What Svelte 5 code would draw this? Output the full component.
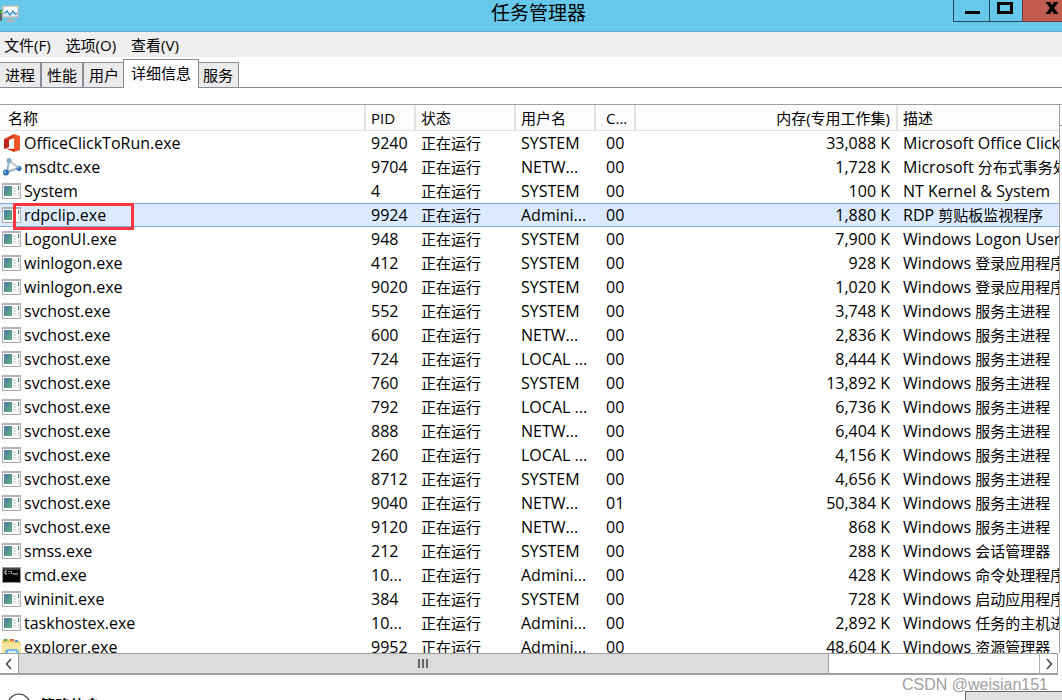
<script>
  const tabs = ['进程', '性能', '用户', '详细信息', '服务'];
  let activeTab = '详细信息';
  let selected = 3;

  const columns = [
    { key: 'name', label: '名称' },
    { key: 'pid', label: 'PID' },
    { key: 'status', label: '状态' },
    { key: 'user', label: '用户名' },
    { key: 'cpu', label: 'C...' },
    { key: 'mem', label: '内存(专用工作集)' },
    { key: 'desc', label: '描述' }
  ];

  // name, pid, user, cpu, memory, vendor part and local part of the description, icon
  const rows = [
    ['OfficeClickToRun.exe', '9240', 'SYSTEM', '00', '33,088', 'Microsoft Office Click', '', 'office'],
    ['msdtc.exe', '9704', 'NETW...', '00', '1,728', 'Microsoft', '分布式事务处', 'msdtc'],
    ['System', '4', 'SYSTEM', '00', '100', 'NT Kernel & System', ''],
    ['rdpclip.exe', '9924', 'Admini...', '00', '1,880', 'RDP', '剪贴板监视程序'],
    ['LogonUI.exe', '948', 'SYSTEM', '00', '7,900', 'Windows Logon User', ''],
    ['winlogon.exe', '412', 'SYSTEM', '00', '928', 'Windows', '登录应用程序'],
    ['winlogon.exe', '9020', 'SYSTEM', '00', '1,020', 'Windows', '登录应用程序'],
    ['svchost.exe', '552', 'SYSTEM', '00', '3,748', 'Windows', '服务主进程'],
    ['svchost.exe', '600', 'NETW...', '00', '2,836', 'Windows', '服务主进程'],
    ['svchost.exe', '724', 'LOCAL ...', '00', '8,444', 'Windows', '服务主进程'],
    ['svchost.exe', '760', 'SYSTEM', '00', '13,892', 'Windows', '服务主进程'],
    ['svchost.exe', '792', 'LOCAL ...', '00', '6,736', 'Windows', '服务主进程'],
    ['svchost.exe', '888', 'NETW...', '00', '6,404', 'Windows', '服务主进程'],
    ['svchost.exe', '260', 'LOCAL ...', '00', '4,156', 'Windows', '服务主进程'],
    ['svchost.exe', '8712', 'SYSTEM', '00', '4,656', 'Windows', '服务主进程'],
    ['svchost.exe', '9040', 'NETW...', '01', '50,384', 'Windows', '服务主进程'],
    ['svchost.exe', '9120', 'NETW...', '00', '868', 'Windows', '服务主进程'],
    ['smss.exe', '212', 'SYSTEM', '00', '288', 'Windows', '会话管理器'],
    ['cmd.exe', '10...', 'Admini...', '00', '428', 'Windows', '命令处理程序', 'cmd'],
    ['wininit.exe', '384', 'SYSTEM', '00', '728', 'Windows', '启动应用程序'],
    ['taskhostex.exe', '10...', 'Admini...', '00', '2,892', 'Windows', '任务的主机进'],
    ['explorer.exe', '9952', 'Admini...', '00', '48,604', 'Windows', '资源管理器', 'folder']
  ].map(([name, pid, user, cpu, mem, vendor, desc, icon = 'app']) => ({ name, pid, user, cpu, mem, vendor, desc, icon }));
</script>

<div class="window">
  <header class="titlebar">
    <svg class="logo" width="20" height="20" viewBox="0 0 20 20" aria-hidden="true">
      <path d="M0 6h2v11H0z" fill="#666" />
      <path d="M0 7h2v2H0z" fill="#42d52c" />
      <path d="M9 14h3v2h3l1 2H6l1-2h2z" fill="#b5b5b5" />
      <rect x="3" y="2" width="15" height="11" fill="#f5fbff" stroke="#c2bebb" stroke-width="1.500" />
      <path d="M4 9l3-2 3 3 3-3 4 2v3H4z" fill="#d3ebf7" />
      <path d="M4 9h1l2-2 3 4 3-4 2 3 2-1" fill="none" stroke="#2581b8" stroke-width="1.200" />
    </svg>
    <h1>任务管理器</h1>
    <div class="controls">
      <button class="min" aria-label="最小化">
        <svg width="16" height="14" viewBox="0 0 16 14"><path d="M1 10h15v3H1z" /></svg>
      </button>
      <button class="max" aria-label="最大化">
        <svg width="16" height="14" viewBox="0 0 16 14"><path d="M0 1h16v12H0zM3 4v6h10V4z" fill-rule="evenodd" /></svg>
      </button>
      <button class="close" aria-label="关闭">
        <svg width="14" height="14" viewBox="0 0 14 14"><path d="M1 1h4l2 3 2-3h4v1L9 7l4 5v1H9l-2-3-2 3H1v-1l4-5-4-5z" /></svg>
      </button>
    </div>
  </header>

  <nav class="menubar">
    <button>文件(F)</button>
    <button>选项(O)</button>
    <button>查看(V)</button>
  </nav>

  <div class="tabs" role="tablist">
    {#each tabs as tab}
      <button
        role="tab"
        class="tab"
        class:active={tab === activeTab}
        aria-selected={tab === activeTab}
        on:click={() => activeTab = tab}
      >{tab}</button>
    {/each}
  </div>

  <main class="panel">
    <div class="list">
      <table>
        <colgroup>
          {#each columns as col}
            <col class="col-{col.key}" />
          {/each}
        </colgroup>
        <thead>
          <tr>
            {#each columns as col}
              <th class={col.key}>{col.label}</th>
            {/each}
          </tr>
        </thead>
        <tbody>
          {#each rows as row, i}
            <tr class:selected={i === selected} on:click={() => selected = i}>
              <td class="name">
                <div class="proc">
                  {#if row.icon === 'office'}
                    <svg width="20" height="20" viewBox="0 0 20 20">
                      <path d="M2 6l10-5v4L7 7v7l-5 2z" fill="#dd3a18" />
                      <path d="M2 6l5 1v7l-5 2z" fill="#c2261a" />
                      <path d="M12 1l6 2v14l-6 2z" fill="#f0562a" />
                      <path d="M4 15.500l8 .5v3z" fill="#d92f17" />
                    </svg>
                  {:else if row.icon === 'msdtc'}
                    <svg width="20" height="20" viewBox="0 0 20 20">
                      <path d="M7 4L5 15l12-4zM7 4l10 7" fill="none" stroke="#9eb0bd" stroke-width="2" />
                      <path d="M8 5l8 5" stroke="#e4ebf0" />
                      <circle cx="7" cy="3.500" r="2.500" fill="#7aa9cc" />
                      <circle cx="4" cy="15.500" r="3" fill="#2d75b3" />
                      <circle cx="17" cy="11.500" r="2.500" fill="#2d75b3" />
                      <circle cx="3" cy="15" r="1" fill="#9fd0ee" />
                      <circle cx="16" cy="10.500" r="1" fill="#9fd0ee" />
                    </svg>
                  {:else if row.icon === 'cmd'}
                    <svg width="20" height="20" viewBox="0 0 20 20">
                      <path d="M.5 2.500h18v15H.5z" fill="#050505" stroke="#999" />
                      <path d="M1 3h17v2H1z" fill="#444" />
                      <path d="M5 6H3v3h2M7 6v1M7 8v1M9 6l1 3M11 9h5" fill="none" stroke="#ddd" />
                    </svg>
                  {:else if row.icon === 'folder'}
                    <svg width="20" height="20" viewBox="0 0 20 20">
                      <path d="M0 4V3l2-1h5l1 2h10l1 2v14H0z" fill="#efcf70" />
                      <path d="M2 2h3v2H2z" fill="#42a55a" />
                      <path d="M8 2h4v2H8z" fill="#e56b43" />
                      <path d="M13 3h3v2h-3z" fill="#4d93c7" />
                      <path d="M0 6h19v14H0z" fill="#f9e5a0" />
                      <path d="M3 20v-6l2-2h10l2 2v6z" fill="#76bce3" />
                      <path d="M6 14h8v2H6z" fill="#d5effa" />
                    </svg>
                  {:else}
                    <svg width="20" height="20" viewBox="0 0 20 20">
                      <defs>
                        <linearGradient id="pane-{i}" x1="0" y1="0" x2="1" y2="1">
                          <stop offset="0" stop-color="#4a7aa5" />
                          <stop offset="1" stop-color="#62b07a" />
                        </linearGradient>
                      </defs>
                      <path d="M.5 2.500h18v15H.5z" fill="#fafafa" stroke="#a6a8aa" />
                      <path d="M0 2h19v2H0z" fill="#b0b3b6" />
                      <path d="M2 5h8v10H2z" fill="url(#pane-{i})" />
                      <path d="M11 6h3v2h-3zM11 9h3v2h-3zM11 12h3v2h-3z" fill="#dcdee0" />
                      <path d="M16 5h1v4h-1z" fill="#318d80" />
                      <path d="M16 10h1v4h-1z" fill="#d5d8da" />
                    </svg>
                  {/if}
                  <span>{row.name}</span>
                  {#if row.name === 'rdpclip.exe'}
                    <i class="marker"></i>
                  {/if}
                </div>
              </td>
              <td class="pid">{row.pid}</td>
              <td class="status">正在运行</td>
              <td class="user">{row.user}</td>
              <td class="cpu">{row.cpu}</td>
              <td class="mem">{row.mem} K</td>
              <td class="desc">{row.vendor} <span class="local">{row.desc}</span></td>
            </tr>
          {/each}
        </tbody>
      </table>
    </div>
    <div class="vscroll">
      <div class="vthumb"></div>
    </div>
  </main>

  <div class="hscroll">
    <button class="arrow left" aria-label="向左滚动">
      <svg width="8" height="12" viewBox="0 0 8 12"><path d="M6 1L1.500 6 6 11" /></svg>
    </button>
    <div class="track">
      <div class="thumb"><i></i><i></i><i></i></div>
    </div>
    <button class="arrow right" aria-label="向右滚动">
      <svg width="8" height="12" viewBox="0 0 8 12"><path d="M2 1l4.500 5L2 11" /></svg>
    </button>
  </div>

  <footer>
    <button class="brief">
      <svg width="24" height="24" viewBox="0 0 24 24">
        <circle cx="12" cy="12" r="11" fill="#fff" stroke="#444" stroke-width="1.200" />
        <path d="M7 14l5-5 5 5" fill="none" stroke="#333" stroke-width="2" />
      </svg>
      简略信息
    </button>
    <button class="end">结束任务(E)</button>
    <span class="watermark">CSDN @weisian151</span>
  </footer>
</div>

<style>
  :global(body) {
    margin: 0;
    overflow: hidden;
  }

  .window {
    display: flex;
    flex-direction: column;
    height: 100vh;
    overflow: hidden;
    background: #fff;
    color: #000;
    font: 15px/24px 'Open Sans', 'Noto Sans CJK SC', sans-serif;
  }

  button {
    margin: 0;
    padding: 0;
    border: none;
    background: none;
    color: inherit;
    font: inherit;
    white-space: nowrap;
  }

  svg {
    display: block;
    flex: none;
  }

  .titlebar {
    display: grid;
    grid-template-columns: 1fr auto 1fr;
    flex: none;
    height: 31px;
    background: #66c9eb;
    border-bottom: 1px solid #6aa9c9;
  }

  .logo {
    margin-top: 4px;
  }

  h1 {
    margin: 0;
    padding-left: 15px;
    font-size: 19px;
    font-weight: 400;
    line-height: 26px;
  }

  .controls {
    display: flex;
    justify-content: flex-end;
  }

  .controls button {
    display: flex;
    justify-content: center;
    box-sizing: border-box;
    width: 36px;
    height: 22px;
    padding-top: 1px;
    border: 1px solid #24495a;
    border-top: none;
    border-right: none;
  }

  .controls .max {
    width: 33px;
    padding-right: 2px;
  }

  .controls .close {
    width: 40px;
    padding-left: 18px;
    background: #c25b50;
    border-color: #6b3a3a;
  }

  .menubar {
    display: flex;
    flex: none;
    gap: 15px;
    height: 25px;
    padding-left: 4px;
    background: #efefef;
  }

  .tabs {
    display: flex;
    align-items: flex-end;
    flex: none;
    height: 30px;
    margin-bottom: 16px;
    border-bottom: 1px solid #898b95;
  }

  .tab {
    box-sizing: border-box;
    height: 25px;
    padding: 0 5px;
    background: #ebebeb;
    border-top: 1px solid #898b95;
    border-right: 2px solid #898b95;
  }

  .tab:nth-child(3) {
    padding-right: 4px;
    border-right: none;
  }

  .tab.active {
    height: 29px;
    margin-bottom: -1px;
    padding: 0 7px 2px;
    background: #fff;
    border: 1px solid #898b95;
    border-bottom: none;
  }

  .tab:last-child {
    padding-left: 4px;
    border-right-width: 1px;
  }

  .panel {
    display: flex;
    flex: 1;
    min-height: 0;
    border-top: 1px solid #a0a0a0;
  }

  .list {
    flex: 1;
    min-width: 0;
    overflow: hidden;
  }

  table {
    width: 100%;
    table-layout: fixed;
    border-collapse: separate;
    border-spacing: 0;
  }

  .col-name { width: 366px; }
  .col-pid { width: 50px; }
  .col-status { width: 100px; }
  .col-user { width: 80px; }
  .col-cpu { width: 40px; }
  .col-mem { width: 262px; }

  th,
  td {
    box-sizing: border-box;
    padding: 0 0 0 5px;
    overflow: hidden;
    text-align: left;
    font-weight: 400;
    white-space: nowrap;
  }

  th {
    height: 26px;
    background: #fcfcfc;
    border-right: 2px solid #e2e2e2;
    border-bottom: 1px solid #e2e2e2;
  }

  th.name {
    padding-left: 8px;
  }

  th:last-child {
    border-right: none;
  }

  td {
    height: 24px;
    font-size: 16px;
  }

  td.status,
  .local {
    font-size: 15px;
  }

  .local {
    line-height: 1;
  }

  td.name {
    padding-left: 2px;
    overflow: visible;
  }

  th.cpu,
  td.cpu {
    padding-left: 10px;
  }

  th.mem {
    padding-right: 6px;
    text-align: right;
  }

  td.mem {
    padding-right: 8px;
    text-align: right;
  }

  .selected td {
    line-height: 22px;
    background: #dceaff;
    border-top: 1px solid #84a7d8;
    border-bottom: 1px solid #84a7d8;
  }

  .proc {
    display: flex;
    align-items: center;
    gap: 2px;
    position: relative;
  }

  .marker {
    position: absolute;
    top: -1px;
    left: 11px;
    box-sizing: border-box;
    width: 121px;
    height: 27px;
    border: 3px solid #fb3640;
  }

  .vscroll {
    width: 2px;
    border-left: 1px solid #a0a0a0;
    background: #fff;
  }

  .vthumb {
    height: 20px;
    border-bottom: 1px solid #a0a0a0;
  }

  .hscroll {
    display: flex;
    flex: none;
    box-sizing: border-box;
    height: 22px;
    margin-right: 4px;
    border: 1px solid #a0a0a0;
    border-left: none;
    border-bottom-width: 2px;
  }

  .arrow {
    display: flex;
    align-items: center;
    justify-content: center;
    width: 18px;
  }

  .arrow.right {
    border-left: 1px solid #b0b0b0;
  }

  .arrow path {
    fill: none;
    stroke: #444;
    stroke-width: 1.5;
  }

  .track {
    flex: 1;
  }

  .thumb {
    display: flex;
    align-items: center;
    justify-content: center;
    gap: 2px;
    box-sizing: border-box;
    width: 79.4%;
    height: 100%;
    background: #dcdcdc;
    border: 1px solid #a0a0a0;
    border-top: none;
    border-bottom: none;
  }

  .thumb i {
    width: 2px;
    height: 9px;
    background: #666;
  }

  footer {
    display: flex;
    justify-content: space-between;
    align-items: flex-start;
    flex: none;
    position: relative;
    height: 25px;
    overflow: hidden;
  }

  .brief {
    display: flex;
    align-items: center;
    gap: 9px;
    margin: 18px 0 0 7px;
    font-weight: 700;
  }

  .end {
    box-sizing: border-box;
    width: 97px;
    height: 32px;
    margin-top: 16px;
    padding-left: 10px;
    background: #e1e1e1;
    border: 1px solid #666;
    border-right: none;
    text-align: left;
    line-height: 24px;
  }

  .watermark {
    position: absolute;
    top: 0;
    right: 14px;
    color: #a0a0a0;
    font: 16px/20px 'Liberation Sans', sans-serif;
  }
</style>
